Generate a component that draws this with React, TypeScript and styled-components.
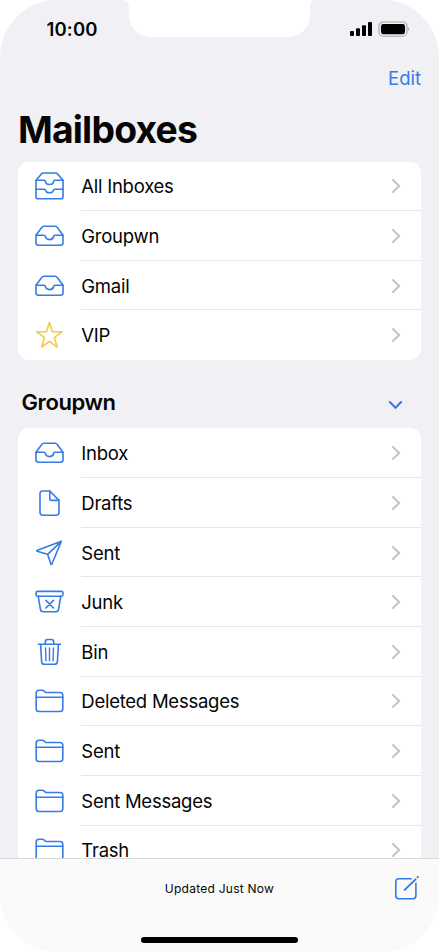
import React from 'react';
import styled, { createGlobalStyle } from 'styled-components';

const BLUE = '#367be6';
const GREY = '#f1f0f5';

const GlobalStyle = createGlobalStyle`
  * { box-sizing: border-box; }
  body { margin: 0; background: #fff; }
`;

const Phone = styled.main`
  position: relative;
  display: flex;
  flex-direction: column;
  width: 439px;
  height: 952px;
  overflow: hidden;
  border-radius: 56px / 58px;
  background: ${GREY};
  color: #050505;
  font-family: Inter, 'Liberation Sans', sans-serif;
`;

const Notch = styled.svg`
  position: absolute;
  top: 0;
  left: 122px;
`;

const StatusBar = styled.header`
  display: flex;
  flex: none;
  justify-content: space-between;
  align-items: center;
  height: 58px;
  padding: 0 29px 0 46.5px;
`;

const Clock = styled.time`
  font-size: 18.5px;
  font-weight: 600;
  letter-spacing: 0.15px;
`;

const NavBar = styled.nav`
  display: flex;
  flex: none;
  justify-content: flex-end;
  align-items: center;
  height: 40px;
  padding-right: 18px;
`;

const EditButton = styled.button`
  padding: 0;
  border: 0;
  background: none;
  color: ${BLUE};
  font: 400 18.5px Inter, sans-serif;
`;

const Title = styled.h1`
  flex: none;
  height: 63.5px;
  margin: 0;
  padding-left: 18px;
  font-size: 37.3px;
  font-weight: 700;
  line-height: 64px;
  letter-spacing: -0.8px;
`;

const Scroll = styled.div`
  flex: 1;
  min-height: 0;
  overflow: hidden;
  padding: 0 18px;
`;

const Card = styled.ul`
  margin: 0;
  padding: 0;
  overflow: hidden;
  border-radius: 11px;
  background: #fff;
  list-style: none;
`;

const Row = styled.li`
  display: flex;
  align-items: stretch;
  height: 49.65px;
  padding-left: 16px;
`;

const IconSlot = styled.span<{ $color: string }>`
  display: flex;
  align-items: center;
  width: 47px;
  color: ${(p) => p.$color};
`;

const RowBody = styled.span<{ $last: boolean }>`
  display: flex;
  flex: 1;
  justify-content: space-between;
  align-items: center;
  padding: 1px 20px 0 0.3px;
  border-bottom: 1px solid ${(p) => (p.$last ? 'transparent' : '#e6e6e8')};
`;

const RowLabel = styled.span`
  font-size: 18.5px;
  line-height: 24px;
  letter-spacing: -0.25px;
`;

const SectionHeader = styled.div`
  display: flex;
  justify-content: space-between;
  align-items: center;
  height: 68.4px;
  padding: 15.4px 18px 0 3.5px;
`;

const SectionTitle = styled.h2`
  margin: 0;
  font-size: 22px;
  font-weight: 600;
  line-height: 28px;
  letter-spacing: -0.4px;
`;

const SectionChevron = styled.svg`
  margin-top: 7px;
`;

const Toolbar = styled.footer`
  display: grid;
  flex: none;
  grid-template-columns: 1fr auto 1fr;
  grid-template-rows: 58px 1fr;
  height: 94px;
  padding: 0 18px;
  border-top: 1px solid #d9d9dc;
  background: #fafafb;
`;

const Status = styled.span`
  grid-column: 2;
  align-self: center;
  font-size: 12px;
  letter-spacing: 0.25px;
`;

const ComposeButton = styled.button`
  display: flex;
  justify-self: end;
  align-self: center;
  padding: 0;
  border: 0;
  background: none;
  color: ${BLUE};
`;

const HomeIndicator = styled.span`
  grid-column: 1 / -1;
  justify-self: center;
  width: 157px;
  height: 6px;
  margin-top: 20px;
  border-radius: 3px;
  background: #000;
`;

type IconName = 'allInboxes' | 'inbox' | 'star' | 'file' | 'plane' | 'junk' | 'bin' | 'folder';

const drawings: Record<IconName, React.ReactNode> = {
  allInboxes: (
    <>
      <path d="M2 9.3 7.4 2.9Q8.2 2 9.5 2H21.5Q22.8 2 23.6 2.9L29 9.3V25.4Q29 27.8 26.6 27.8H4.4Q2 27.8 2 25.4Z" />
      <path d="M2 9.3H9.9Q11.2 9.3 11.4 10.6Q11.9 13.5 15.5 13.5T19.6 10.6Q19.8 9.3 21.1 9.3H29M2 18.2H10.2Q11.3 18.2 11.7 19.4Q12.5 21.8 15.5 21.8T19.3 19.4Q19.7 18.2 20.8 18.2H29" />
    </>
  ),
  inbox: (
    <>
      <path d="M2 14.2 7.5 6.7Q8.5 5.3 10 5.3H21Q22.5 5.3 23.5 6.7L29 14.2V21.7Q29 24.2 26.5 24.2H4.5Q2 24.2 2 21.7Z" />
      <path d="M2 14.2H9.9Q11.2 14.2 11.4 15.5Q11.9 18.6 15.5 18.6T19.6 15.5Q19.8 14.2 21.1 14.2H29" />
    </>
  ),
  star: <path d="M15.4 2.6 18.4 11.8H28L20.3 17.6 23.2 27 15.4 21.3 7.6 27 10.5 17.6 2.8 11.8H12.4Z" />,
  file: (
    <>
      <path d="M8.4 3H15.8L25 12.4V24.2Q25 27.2 22 27.2H9Q6 27.2 6 24.2V5.8Q6 3 8.4 3Z" />
      <path d="M15.8 3V10.6Q15.8 12.4 17.6 12.4H25" />
    </>
  ),
  plane: <path d="M27.3 3.3 2.8 12.5Q2.6 13 3 13.2L13.6 16.3 17 26.3Q17.4 26.8 17.8 26.3ZM13.6 16.3 27.3 3.3" />,
  junk: (
    <>
      <rect x="2" y="4.4" width="27" height="4.8" rx="1.6" />
      <path d="M4.2 9.2 6.4 22.2Q6.8 24.7 9 24.7H22Q24.2 24.7 24.6 22.2L26.8 9.2M11.9 13.4 19.5 21M19.5 13.4 11.9 21" />
    </>
  ),
  bin: (
    <>
      <path d="M4.5 7.2H26.5M11.3 7V4.8Q11.3 2.5 13.6 2.5H17.4Q19.7 2.5 19.7 4.8V7M6.6 7.3 7.6 24.6Q7.8 27.3 10.3 27.3H20.7Q23.2 27.3 23.4 24.6L24.4 7.3" />
      <path strokeWidth="1.4" d="M11.5 11 12 23.7M15.5 11V23.7M19.5 11 19 23.7" />
    </>
  ),
  folder: (
    <>
      <path d="M2.2 7.2Q2.2 4.3 5 4.3H8.2Q9.3 4.3 10.2 5.1L11 5.8Q11.9 6.5 13.1 6.5H26Q28.8 6.5 28.8 9.3V22.7Q28.8 25.5 26 25.5H5Q2.2 25.5 2.2 22.7Z" />
      <path d="M2.2 11.3H28.8" />
    </>
  ),
};

const MailIcon = ({ name }: { name: IconName }) => (
  <svg width="31" height="30" viewBox="0 0 31 30" fill="none" stroke="currentColor" strokeWidth="1.6" strokeLinejoin="round" strokeLinecap="round">
    {drawings[name]}
  </svg>
);

const Chevron = () => (
  <svg width="10" height="16" viewBox="0 0 10 16" fill="none" stroke="#c3c3c6" strokeWidth="2" strokeLinecap="round" strokeLinejoin="round">
    <path d="M2 2 8.2 8 2 14" />
  </svg>
);

type Mailbox = { label: string; icon: IconName };

const accounts: Mailbox[] = [
  { label: 'All Inboxes', icon: 'allInboxes' },
  { label: 'Groupwn', icon: 'inbox' },
  { label: 'Gmail', icon: 'inbox' },
  { label: 'VIP', icon: 'star' },
];

const folders: Mailbox[] = [
  { label: 'Inbox', icon: 'inbox' },
  { label: 'Drafts', icon: 'file' },
  { label: 'Sent', icon: 'plane' },
  { label: 'Junk', icon: 'junk' },
  { label: 'Bin', icon: 'bin' },
  { label: 'Deleted Messages', icon: 'folder' },
  { label: 'Sent', icon: 'folder' },
  { label: 'Sent Messages', icon: 'folder' },
  { label: 'Trash', icon: 'folder' },
];

const MailboxList = ({ items }: { items: Mailbox[] }) => (
  <Card>
    {items.map((item, i) => (
      <Row key={i}>
        <IconSlot $color={item.icon === 'star' ? '#f3cb4e' : BLUE}>
          <MailIcon name={item.icon} />
        </IconSlot>
        <RowBody $last={i === items.length - 1}>
          <RowLabel>{item.label}</RowLabel>
          <Chevron />
        </RowBody>
      </Row>
    ))}
  </Card>
);

export default function App() {
  return (
    <>
      <GlobalStyle />
      <Phone>
        <Notch width="195" height="38" viewBox="0 0 195 38" fill="#fff">
          <path d="M1 0Q6.8 0 6.8 6V12C6.8 28 16 37.3 32 37.3H163C179 37.3 188.2 28 188.2 12V6Q188.2 0 194 0Z" />
        </Notch>
        <StatusBar>
          <Clock>10:00</Clock>
          <svg width="60" height="16" viewBox="0 0 60 16">
            <g fill="#000">
              <rect x="0" y="10" width="4" height="5" rx="1" />
              <rect x="6" y="7.2" width="4" height="7.8" rx="1" />
              <rect x="12" y="4.2" width="4" height="10.8" rx="1" />
              <rect x="18" y="1" width="4" height="14" rx="1" />
              <rect x="31" y="3" width="24" height="10.3" rx="2.4" />
            </g>
            <rect x="29" y="1" width="28" height="14.2" rx="4.3" fill="none" stroke="#a4a3a7" strokeWidth="1.1" />
            <path d="M58.4 6Q60 8 58.4 10.2Z" fill="#77767a" />
          </svg>
        </StatusBar>
        <NavBar>
          <EditButton>Edit</EditButton>
        </NavBar>
        <Title>Mailboxes</Title>
        <Scroll>
          <MailboxList items={accounts} />
          <SectionHeader>
            <SectionTitle>Groupwn</SectionTitle>
            <SectionChevron width="15" height="10" viewBox="0 0 15 10" fill="none" stroke={BLUE} strokeWidth="2.1" strokeLinecap="round" strokeLinejoin="round">
              <path d="M1.8 2 7.5 7.8 13.2 2" />
            </SectionChevron>
          </SectionHeader>
          <MailboxList items={folders} />
        </Scroll>
        <Toolbar>
          <Status>Updated Just Now</Status>
          <ComposeButton aria-label="Compose">
            <svg width="27" height="26" viewBox="0 0 27 26" fill="none" stroke="currentColor" strokeWidth="1.6" strokeLinecap="round">
              <path d="M17.3 3.7H4.7Q1.8 3.7 1.8 6.6V20.8Q1.8 23.7 4.7 23.7H19Q21.9 23.7 21.9 20.8V8.4" />
              <path strokeWidth="2" d="M10.7 14.9 21.5 4.4M23.6 2.3 23.9 2" />
            </svg>
          </ComposeButton>
          <HomeIndicator />
        </Toolbar>
      </Phone>
    </>
  );
}
